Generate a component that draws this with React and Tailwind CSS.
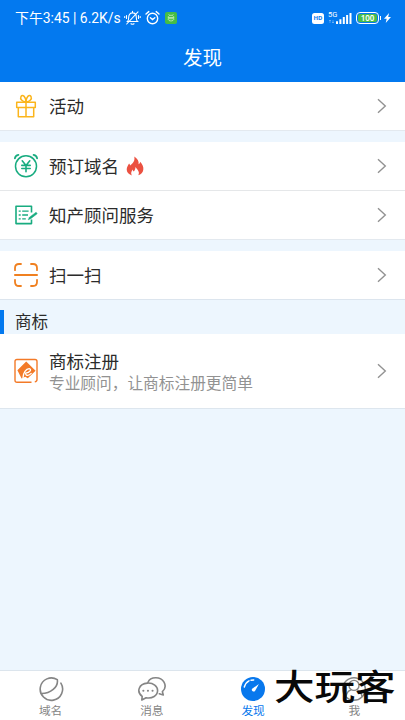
import React from 'react';

const Chevron = () => (
  <svg className="mr-[18px] shrink-0" width="10" height="16" viewBox="0 0 10 16" fill="none" stroke="#929292" strokeWidth="1.4">
    <path d="M1 1.2 8.3 8 1 14.8" />
  </svg>
);

const Gift = () => (
  <svg width="24" height="26" viewBox="0 0 24 26" fill="none" stroke="#fbb51c" strokeWidth="1.5" strokeLinejoin="round">
    <path d="M2.7 9.2h18.6v5.2H2.7zM4.3 14.4h15.4v9.3H4.3zM12 9.2v14.5" />
    <path d="M12 9C8 8.5 5.8 6 7 3.5 8.7.8 12 4 12 9ZM12 9c4-.5 6.2-3 5-5.5C15.3.8 12 4 12 9Z" />
  </svg>
);

const YenClock = () => (
  <svg width="24" height="26" viewBox="0 0 24 26" fill="none" stroke="#18ac80" strokeWidth="1.5" strokeLinecap="round">
    <circle cx="12" cy="13.3" r="10.5" />
    <path d="M.9 5.4Q1.2 2.3 4.4 1.8M19.6 1.8q3.2.5 3.5 3.6" strokeWidth="1.8" />
    <path d="m8.2 7.8 3.8 4.6 3.8-4.6M12 12.4v6.3M7.8 12.4h8.4M7.8 15.5h8.4" strokeWidth="1.6" />
  </svg>
);

const FormPen = () => (
  <svg width="24" height="26" viewBox="0 0 24 26" fill="none" stroke="#18ac80" strokeWidth="1.6" strokeLinejoin="round">
    <path d="M17.5 10.5V4.2H2v17.4h15.5v-4" />
    <path d="M4.7 9.2h2M8.2 9.2h6.4M4.7 13h2M8.2 13h5.8M4.7 16.8h2M8.2 16.8h3.6" strokeWidth="1.3" />
    <path d="m14.2 17.8 1.3-2.6 6.6-5 1.1 1.5-6.5 5z" fill="#18ac80" strokeWidth=".5" />
  </svg>
);

const Scan = () => (
  <svg width="24" height="26" viewBox="0 0 24 26" fill="none" stroke="#f08020" strokeWidth="1.8" strokeLinecap="round">
    <path d="M1 8.2V6q0-4 4-4h2M17 2h2q4 0 4 4v2.2M23 17.8V20q0 4-4 4h-2M7 24H5q-4 0-4-4v-2.2M.9 13h22.2" />
  </svg>
);

const Trademark = () => (
  <svg width="24" height="26" viewBox="0 0 24 26" fill="none">
    <path d="M17.5 24.2H3q-2 0-2-2V3.5q0-2 2-2h18q2 0 2 2v18q0 2.1-2.2 2.3" stroke="#f37a28" strokeWidth="1.4" />
    <path d="M12.2 3.6 21.6 12.8 13.8 20.3 11.2 18.8 7.6 20.6 3.4 12.2z" fill="#f37a28" />
    <path d="M9 19.6C9.2 14.6 12 10.8 15.2 10.6c2.8.4 1 4.1-3.6 4.6M11.6 15.2c.2 3.4 3.6 2.4 5.6.2" stroke="#fff" strokeWidth="1.3" strokeLinecap="round" />
  </svg>
);

const Flame = () => (
  <svg className="ml-[7px]" width="18" height="20" viewBox="0 0 18 20">
    <path fill="#eb5141" d="M8.3.5c3.2 2.2 4.8 4.8 4.3 7.8 1-.6 1.5-1.5 1.6-2.6 2.3 2.6 3.6 5.3 3.1 8-.4 2.8-2.3 4.7-5 5.6 1.7-3.1-.3-4.8-2.8-8.2-.2 2.5-.8 3.6-1.7 4.5-.7-.6-1-1.2-1-2.1-1.7 2-2.1 3.8-1 5.9C2.5 18.2.6 16.3.7 13.3c.1-2.4 1.4-4 2.4-5.8.7.7.9 1.3 1 2C7.6 6.8 9 4.5 8.3.5Z" />
  </svg>
);

const Row = ({ icon, title, hot, border }) => (
  <div className={`flex h-[49px] items-center border-b bg-white ${border}`}>
    <span className="ml-[14px] w-[35px] shrink-0">{icon}</span>
    <span className="text-[17.5px] leading-6">{title}</span>
    {hot && <Flame />}
    <span className="flex-1" />
    <Chevron />
  </div>
);

const StatusBar = () => (
  <div className="flex h-9 items-center pl-[15px] pr-[14px]">
    <span className="w-[108px] whitespace-nowrap font-['Roboto','Noto_Sans_CJK_SC',sans-serif] text-[13.9px] leading-5">下午3:45 | 6.2K/s</span>
    <svg className="ml-[1px]" width="17" height="16" viewBox="0 0 17 16" fill="none" stroke="#fff" strokeWidth="1.1" strokeLinecap="round">
      <path d="M3.5 11.5c1.2-1 1.2-2.2 1.2-4.3 0-2.7 1.6-4.3 3.8-4.3s3.8 1.6 3.8 4.3c0 2.1 0 3.3 1.2 4.3zM8.5 1.2v1.7M7 13.7q1.5 1 3 0M2.7 14 14 1.8M2.5 5.5v3M.7 6.5v1M14.5 5.5v3M16.2 6.5v1" />
    </svg>
    <svg className="ml-[4px]" width="15" height="16" viewBox="0 0 15 16" fill="none" stroke="#fff" strokeWidth="1.4" strokeLinecap="round">
      <circle cx="7.5" cy="8.5" r="5.2" />
      <path d="M1 4 3.8 1.6M14 4l-2.8-2.4M5.4 7.7l2.1 1.8 2.3-1.8" />
    </svg>
    <svg className="ml-[5px]" width="12" height="12" viewBox="0 0 12 12" fill="none">
      <rect width="12" height="12" rx="2" fill="#45bd45" />
      <path d="M3 5.5c.4-3 5.6-3 6 0zM3 6.7h6c-.2 3-5.8 3-6 0M4.3 3l-.6-.8M7.7 3l.6-.8" stroke="#c7efbf" strokeWidth=".8" />
    </svg>
    <span className="flex-1" />
    <span className="flex h-[11px] w-[12px] items-center justify-center rounded-[2.5px] bg-white text-[6px] font-bold leading-none text-[#0879ef]">HD</span>
    <span className="relative ml-[4px] h-[16px] w-[25px]">
      <svg width="25" height="16" viewBox="0 0 25 16" fill="#fff">
        <path d="M8 11.3h2V14H8zM11.4 9.2h2V14h-2zM14.8 7h2v7h-2zM18.1 5h2v9h-2zM21.5 3h2v11h-2z" />
        <path d="M2 10v3M1 11l1-1 1 1M5 13v-3M4 12l1 1 1-1" fill="none" stroke="#fff" strokeWidth=".5" opacity=".6" />
      </svg>
      <span className="absolute left-0 top-[1px] font-['Roboto',sans-serif] text-[7.5px] leading-[7px]">5G</span>
    </span>
    <span className="ml-[3px] flex h-[12px] w-[23px] rounded-[4px] border border-white p-[1px]">
      <span className="flex flex-1 items-center justify-center rounded-[2px] bg-[#49bd49] text-[8px] font-semibold leading-none">100</span>
    </span>
    <span className="ml-[1px] h-[4px] w-[1px] bg-white" />
    <svg className="ml-[3px]" width="7" height="10" viewBox="0 0 7 10" fill="#fff"><path d="M5.1 0 0 5.7h2.7L1.7 10 7 4.1H4.2z" /></svg>
  </div>
);

const Tab = ({ label, active, children }) => (
  <div className={`flex flex-1 flex-col items-center pt-[5px] ${active ? 'text-[#0878ed]' : 'text-[#858585]'}`}>
    {children}
    <span className="mt-px text-[11.7px] leading-[15px]">{label}</span>
  </div>
);

export default function App() {
  return (
    <div className="relative flex h-[720px] w-[405px] flex-col overflow-hidden bg-[#edf6fe] font-['Noto_Sans','Noto_Sans_CJK_SC',sans-serif] text-[#2b2b2b]">
      <header className="h-[82px] shrink-0 bg-[#0379ef] text-white">
        <StatusBar />
        <h1 className="pt-[7px] text-center text-[19.5px] leading-[30px]">发现</h1>
      </header>

      <main className="flex-1">
        <Row icon={<Gift />} title="活动" border="border-[#e3e9ef]" />
        <div className="mt-[11px]">
          <Row icon={<YenClock />} title="预订域名" hot border="border-[#e5e7e9]" />
          <Row icon={<FormPen />} title="知产顾问服务" border="border-[#e3e9ef]" />
        </div>
        <div className="mt-[11px]">
          <Row icon={<Scan />} title="扫一扫" border="border-[#dce5ee]" />
        </div>
        <div className="flex h-[34px] items-end">
          <span className="h-6 w-1 bg-[#0379ef]" />
          <h2 className="ml-[11px] text-[16.5px] leading-[24px]">商标</h2>
        </div>
        <div className="flex h-[75px] items-center border-b border-[#dde6ee] bg-white">
          <span className="ml-[14px] w-[35px] shrink-0"><Trademark /></span>
          <div className="flex-1 whitespace-nowrap pt-[2px]">
            <p className="text-[17.5px] leading-[22px]">商标注册</p>
            <p className="text-[15.7px] leading-[23px] text-[#929292]">专业顾问，让商标注册更简单</p>
          </div>
          <Chevron />
        </div>
      </main>

      <nav className="flex h-[50px] shrink-0 border-t border-[#dce5ed] bg-white">
        <Tab label="域名">
          <svg width="26" height="26" viewBox="0 0 26 26" fill="none" stroke="#858585" strokeWidth="1.6" strokeLinecap="round">
            <path d="M22.9 7.2A11.2 11.2 0 1 1 19.3 3.6C20.6 11 12.6 17.8 2.8 17.5" />
          </svg>
        </Tab>
        <Tab label="消息">
          <svg width="30" height="26" viewBox="0 0 30 26" fill="none" stroke="#858585" strokeWidth="1.6" strokeLinecap="round" strokeLinejoin="round">
            <path d="M11 6.3C13.4.4 23.7.2 27 6.2c2 3.6.9 7.2-1.6 9.5l.9 3.2-4-1.2" />
            <path d="M5.2 20.4C-1 15.6 1.9 7.7 10.4 7.1c6-.4 10.2 3.1 10.2 7.4 0 5-5.4 8.5-11.5 7.2L4.8 24z" />
            <path d="M6.3 14.7h.1M10.9 14.7h.1M15.5 14.7h.1" strokeWidth="2" />
          </svg>
        </Tab>
        <Tab label="发现" active>
          <svg width="26" height="26" viewBox="0 0 26 26" fill="none">
            <circle cx="13" cy="13" r="12" fill="#0878ed" />
            <path d="M4.3 11Q5.7 6.4 9 4.8M11 4.2l2.7-.3" stroke="#fff" strokeWidth="1.5" strokeLinecap="round" />
            <path d="m18.9 8-3.9 7c-1.3 1.6-4.2-.4-2.9-2.2z" fill="#fff" />
          </svg>
        </Tab>
        <Tab label="我">
          <svg width="26" height="26" viewBox="0 0 26 26" fill="none" stroke="#858585" strokeWidth="1.4">
            <circle cx="13" cy="13" r="11.3" /><circle cx="13" cy="9.4" r="5" />
            <path d="M5 20.8c.4-3.6 2.2-6 5-7M21 20.8c-.4-3.6-2.2-6-5-7" />
          </svg>
        </Tab>
      </nav>
      <span className="absolute left-[274px] top-[670px] origin-top-left scale-y-[0.87] whitespace-nowrap text-[40.5px] font-medium leading-[40px] text-[#080808]">大玩客</span>
    </div>
  );
}
